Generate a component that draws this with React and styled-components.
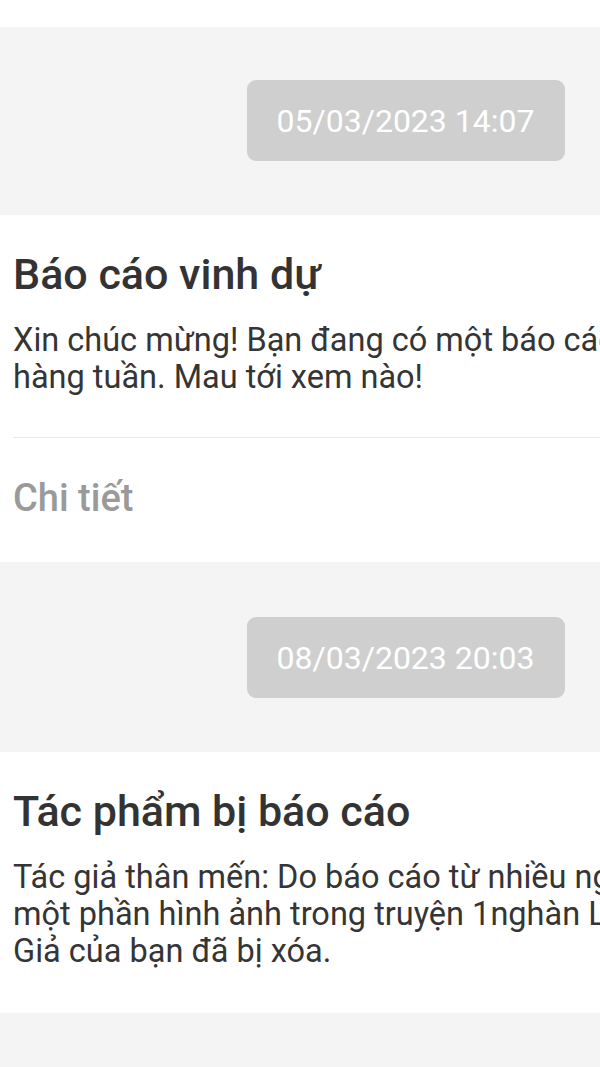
import styled, { createGlobalStyle } from "styled-components";

const GlobalStyle = createGlobalStyle`
  html, body {
    margin: 0;
    padding: 0;
    overflow: hidden;
    background: #f4f4f4;
  }
  body {
    font-family: Roboto, "Noto Sans", sans-serif;
  }
`;

const Page = styled.div`
  width: 811px;
  min-height: 1067px;
  background: #f4f4f4;
`;

const TopStrip = styled.div`
  height: 27px;
  background: #ffffff;
`;

const DateRow = styled.div`
  display: flex;
  justify-content: center;
  padding: ${(p) => (p.$first ? "53px 0 54px" : "55px 0 54px")};
`;

const DateBadge = styled.div`
  width: 318px;
  height: 81px;
  display: flex;
  align-items: center;
  justify-content: center;
  background: #cfcfcf;
  border-radius: 9px;
  color: #ffffff;
  font-size: 32px;
  font-weight: 400;
`;

const Card = styled.div`
  background: #ffffff;
  padding: 35px 13px ${(p) => (p.$withFooter ? "0" : "43px")};
`;

const Title = styled.h2`
  margin: 0 0 24px;
  font-size: 43px;
  line-height: 48px;
  font-weight: 500;
  color: #333333;
`;

const Body = styled.p`
  margin: 0;
  max-width: 772px;
  font-size: 32.5px;
  line-height: 37px;
  color: #353535;
`;

const Divider = styled.div`
  height: 1px;
  background: #e6e6e6;
  margin-top: 41px;
`;

const Footer = styled.div`
  padding: 38px 0 42px;
  font-size: 38px;
  line-height: 44px;
  font-weight: 500;
  color: #9a9a9a;
`;

const notices = [
  {
    date: "05/03/2023 14:07",
    title: "Báo cáo vinh dự",
    body: "Xin chúc mừng! Bạn đang có một báo cáo vinh dự hàng tuần. Mau tới xem nào!",
    link: "Chi tiết",
  },
  {
    date: "08/03/2023 20:03",
    title: "Tác phẩm bị báo cáo",
    body: "Tác giả thân mến: Do báo cáo từ nhiều người dùng, một phần hình ảnh trong truyện 1nghàn Lời Của Tác Giả của bạn đã bị xóa.",
  },
];

const App = () => {
  return (
    <Page>
      <GlobalStyle />
      <TopStrip />
      {notices.map((n, i) => (
        <section key={n.date}>
          <DateRow $first={i === 0}>
            <DateBadge>{n.date}</DateBadge>
          </DateRow>
          <Card $withFooter={!!n.link}>
            <Title>{n.title}</Title>
            <Body>{n.body}</Body>
            {n.link && (
              <>
                <Divider />
                <Footer>{n.link}</Footer>
              </>
            )}
          </Card>
        </section>
      ))}
    </Page>
  );
};

export default App;
